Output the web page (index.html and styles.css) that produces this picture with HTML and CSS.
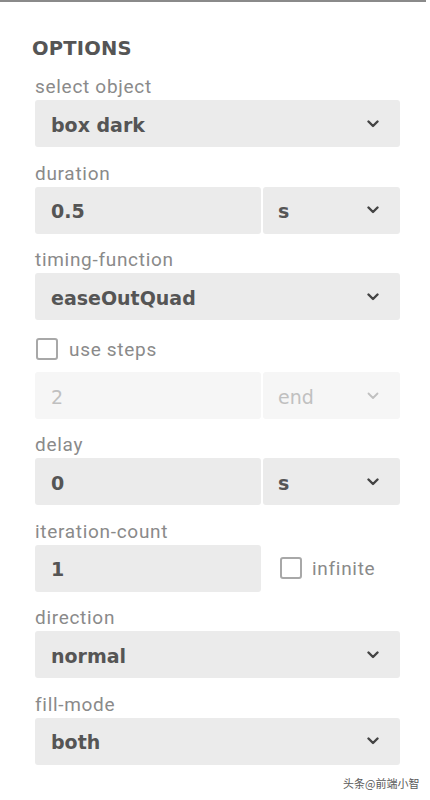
FILE: index.html
```html
<!DOCTYPE html>
<html>
<head>
<meta charset="utf-8">
<link rel="stylesheet" href="styles.css">
</head>
<body>
<div class="topline"></div>
<div class="panel">
  <h2 class="title">OPTIONS</h2>

  <div class="field">
    <div class="label">select object</div>
    <div class="control">
      <div class="select full"><span class="value">box dark</span><svg class="chev" viewBox="0 0 12 8"><path d="M1.5 1.5 L6 6 L10.5 1.5"/></svg></div>
    </div>
  </div>

  <div class="field">
    <div class="label">duration</div>
    <div class="control split">
      <div class="input"><span class="value">0.5</span></div>
      <div class="select unit"><span class="value">s</span><svg class="chev" viewBox="0 0 12 8"><path d="M1.5 1.5 L6 6 L10.5 1.5"/></svg></div>
    </div>
  </div>

  <div class="field">
    <div class="label">timing-function</div>
    <div class="control">
      <div class="select full"><span class="value">easeOutQuad</span><svg class="chev" viewBox="0 0 12 8"><path d="M1.5 1.5 L6 6 L10.5 1.5"/></svg></div>
    </div>
  </div>

  <div class="check-row">
    <span class="checkbox"></span><span class="check-label">use steps</span>
  </div>

  <div class="control split disabled steps">
    <div class="input"><span class="value">2</span></div>
    <div class="select unit"><span class="value">end</span><svg class="chev" viewBox="0 0 12 8"><path d="M1.5 1.5 L6 6 L10.5 1.5"/></svg></div>
  </div>

  <div class="field">
    <div class="label">delay</div>
    <div class="control split">
      <div class="input"><span class="value">0</span></div>
      <div class="select unit"><span class="value">s</span><svg class="chev" viewBox="0 0 12 8"><path d="M1.5 1.5 L6 6 L10.5 1.5"/></svg></div>
    </div>
  </div>

  <div class="field">
    <div class="label">iteration-count</div>
    <div class="control split">
      <div class="input"><span class="value">1</span></div>
      <div class="inline-check"><span class="checkbox"></span><span class="check-label">infinite</span></div>
    </div>
  </div>

  <div class="field">
    <div class="label">direction</div>
    <div class="control">
      <div class="select full"><span class="value">normal</span><svg class="chev" viewBox="0 0 12 8"><path d="M1.5 1.5 L6 6 L10.5 1.5"/></svg></div>
    </div>
  </div>

  <div class="field">
    <div class="label">fill-mode</div>
    <div class="control">
      <div class="select full"><span class="value">both</span><svg class="chev" viewBox="0 0 12 8"><path d="M1.5 1.5 L6 6 L10.5 1.5"/></svg></div>
    </div>
  </div>
</div>
<div class="watermark">头条@前端小智</div>
</body>
</html>
```

FILE: styles.css
```css
html, body {
  margin: 0;
  padding: 0;
  background: #ffffff;
}
body {
  width: 430px;
  height: 800px;
  position: relative;
  overflow: hidden;
  font-family: Roboto, "Liberation Sans", sans-serif;
}
.topline {
  width: 426px;
  height: 2px;
  background: #8a8a8a;
}
.panel {
  padding: 36px 30px 0 35px;
  display: flex;
  flex-direction: column;
}
.title {
  margin: 0 0 0 -3px;
  font-family: "DejaVu Sans", sans-serif;
  font-weight: bold;
  font-size: 19.5px;
  line-height: 22px;
  letter-spacing: 0.2px;
  color: #555555;
}
.field {
  display: flex;
  flex-direction: column;
}
.title + .field {
  margin-top: 16px;
}
.field + .field {
  margin-top: 15.5px;
}
.steps + .field {
  margin-top: 15px;
}
.label {
  height: 24px;
  line-height: 22px;
  font-size: 19px;
  letter-spacing: 0.7px;
  color: #8a8a8a;
}
.control {
  display: flex;
  height: 47px;
  width: 365px;
}
.split {
  gap: 2px;
}
.select, .input {
  display: flex;
  align-items: center;
  background: #ebebeb;
  border-radius: 3px;
  box-sizing: border-box;
  padding-left: 16px;
}
.full {
  flex: 1;
  justify-content: space-between;
  padding-right: 21px;
}
.input {
  width: 226px;
}
.unit {
  flex: 1;
  justify-content: space-between;
  padding-left: 15px;
  padding-right: 21px;
}
.value {
  font-family: "DejaVu Sans", sans-serif;
  font-weight: bold;
  font-size: 19px;
  color: #555555;
  padding-top: 2px;
}
.chev {
  width: 12px;
  height: 8px;
  fill: none;
  stroke: #444444;
  stroke-width: 2.4;
  stroke-linecap: round;
  stroke-linejoin: round;
}
.check-row {
  margin-top: 17px;
  height: 24px;
  display: flex;
  align-items: center;
  gap: 11px;
  padding-left: 1px;
}
.checkbox {
  width: 22px;
  height: 22px;
  box-sizing: border-box;
  border: 2px solid #a8a8a8;
  border-radius: 3px;
  background: #fff;
}
.check-label {
  font-size: 19px;
  letter-spacing: 0.7px;
  color: #8a8a8a;
}
.steps {
  margin-top: 11px;
}
.disabled .select, .disabled .input {
  background: #f6f6f6;
}
.disabled .value {
  color: #c0c0c0;
  font-weight: normal;
}
.disabled .chev {
  stroke: #c0c0c0;
  stroke-width: 1.8;
}
.inline-check {
  display: flex;
  align-items: center;
  gap: 10px;
  padding-left: 17px;
}
.watermark {
  position: absolute;
  left: 343px;
  top: 776px;
  font-family: "Noto Sans CJK SC", sans-serif;
  font-size: 11px;
  line-height: 15px;
  color: #5a5a5a;
}
```
